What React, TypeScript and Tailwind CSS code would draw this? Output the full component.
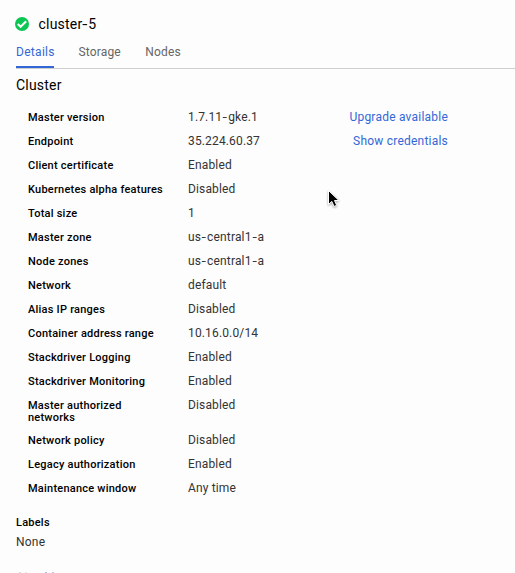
import React from "react";

type Row = { label: string; value: string; action?: string; tall?: boolean };

const rows: Row[] = [
  { label: "Master version", value: "1.7.11-gke.1", action: "Upgrade available" },
  { label: "Endpoint", value: "35.224.60.37", action: "Show credentials" },
  { label: "Client certificate", value: "Enabled" },
  { label: "Kubernetes alpha features", value: "Disabled" },
  { label: "Total size", value: "1" },
  { label: "Master zone", value: "us-central1-a" },
  { label: "Node zones", value: "us-central1-a" },
  { label: "Network", value: "default" },
  { label: "Alias IP ranges", value: "Disabled" },
  { label: "Container address range", value: "10.16.0.0/14" },
  { label: "Stackdriver Logging", value: "Enabled" },
  { label: "Stackdriver Monitoring", value: "Enabled" },
  { label: "Master authorized networks", value: "Disabled", tall: true },
  { label: "Network policy", value: "Disabled" },
  { label: "Legacy authorization", value: "Enabled" },
  { label: "Maintenance window", value: "Any time" },
];

function StatusIcon() {
  return (
    <svg className="-ml-px mr-px h-[14px] w-[14px]" viewBox="0 0 14 14">
      <circle cx="7" cy="7" r="7" fill="#0bc653" />
      <path d="M2.8 7 5.6 9.8 11.2 4.2" fill="none" stroke="#fff" strokeWidth="2" />
    </svg>
  );
}

function Pointer() {
  return (
    <svg className="absolute left-[326px] top-[189px] h-[22px] w-[16px] drop-shadow-[0_1px_1px_rgba(0,0,0,0.35)]" viewBox="0 0 16 22">
      <path
        d="M2.5 1.5V15.5L5.8 12.4L8.1 17.5L10.7 16.3L8.5 11.5H12.9Z"
        fill="#000"
        stroke="#fff"
        strokeWidth="1"
      />
    </svg>
  );
}

// Hyphens are set slightly wider than the font's own glyph.
function Value({ text }: { text: string }) {
  return (
    <>
      {text.split(/(-)/).map((part, i) =>
        part === "-" ? (
          <span key={i} className="inline-block w-[6px] text-center">
            <span className="inline-block scale-x-[1.35]">-</span>
          </span>
        ) : (
          part
        ),
      )}
    </>
  );
}

export default function App() {
  return (
    <div className="relative h-[573px] w-[515px] overflow-hidden bg-[#fdfdfd] pl-4 font-['Roboto',sans-serif] text-[#333]">
      <header className="flex h-[38px] items-center gap-[8.5px] pt-[10px]">
        <StatusIcon />
        <h1 className="text-[14px] leading-5 tracking-[0.2px] text-black">
          <Value text="cluster-5" />
        </h1>
      </header>
      <nav className="flex h-[31px] gap-[24.5px] border-b border-[#cfcfcf] text-[12px] leading-[28px] tracking-[0.15px] text-[#666]">
        <span className="h-[30px] w-[38px] border-b-2 border-[#3367d6] tracking-[0.3px] text-[#3367d6]">Details</span>
        <span>Storage</span>
        <span>Nodes</span>
      </nav>
      <h2 className="h-[36px] pt-[6px] text-[14px] leading-5 tracking-[0.2px] text-black">Cluster</h2>
      <dl className="pl-3">
        {rows.map((row) => (
          <div key={row.label} className={row.tall ? "flex h-[35px]" : "flex h-6"}>
            <dt className="w-[160px] pr-8 pt-[7px] text-[11px] font-medium leading-3 tracking-[0.23px] text-black">
              <span className={row.tall ? "" : "whitespace-nowrap"}>{row.label}</span>
            </dt>
            <dd className="w-[130px] text-[12px] leading-6 tracking-[0.15px]">
              <Value text={row.value} />
            </dd>
            {row.action && (
              <dd className="w-[130px] text-right text-[12px] leading-6 tracking-[0.22px] text-[#3367d6]">{row.action}</dd>
            )}
          </div>
        ))}
      </dl>
      <section className="pt-[15px]">
        <h3 className="text-[11px] font-medium leading-4 tracking-[0.23px] text-black">Labels</h3>
        <p className="text-[12px] leading-[22px] tracking-[0.2px]">None</p>
      </section>
      {/* Top edge of the next section, cut off by the panel's bottom */}
      <div className="mt-[19px] flex h-px pl-[3px]">
        <i className="w-[2px] bg-[#dcdcdc]" />
        <i className="ml-[4px] w-[2px] bg-[#e6e6e6]" />
        <i className="ml-[18px] w-[2px] bg-[#a9bdec]" />
        <i className="ml-[5px] w-[2px] bg-[#b4c5ee]" />
      </div>
      <Pointer />
    </div>
  );
}
